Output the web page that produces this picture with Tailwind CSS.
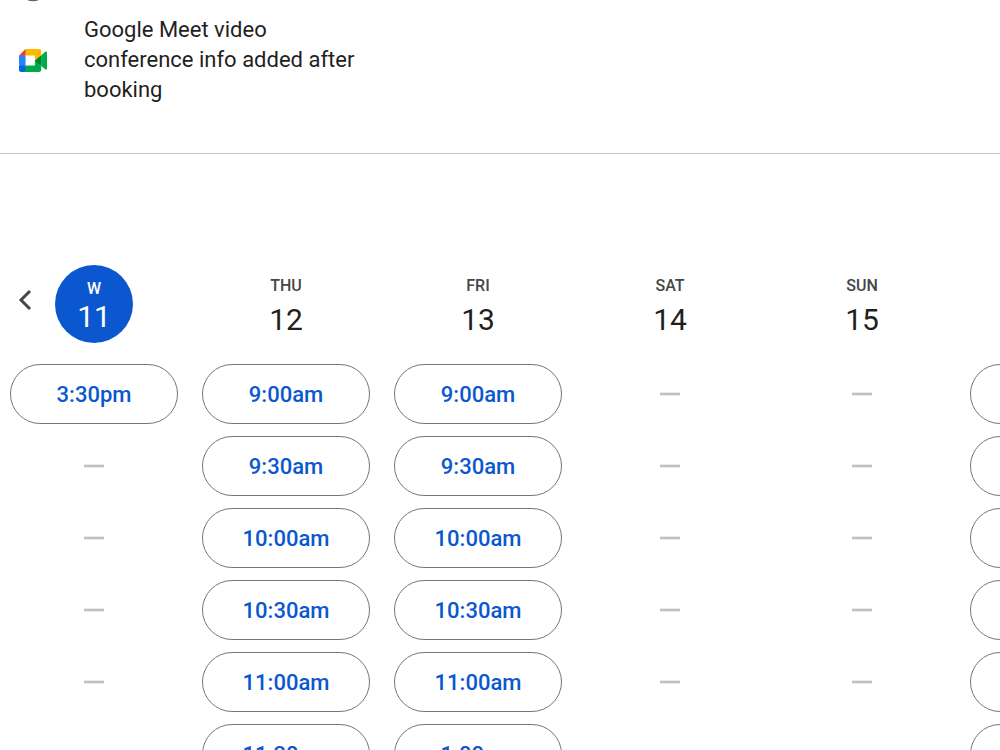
<!DOCTYPE html>
<html lang="en">
<head>
    <meta charset="UTF-8">
    <meta name="viewport" content="width=device-width, initial-scale=1">
    <title>Book an appointment</title>
    <script src="https://cdn.jsdelivr.net/npm/@tailwindcss/browser@4"></script>
</head>
<body class="h-screen overflow-hidden bg-white text-[#1f1f1f] font-['Google_Sans','Roboto',sans-serif]">

    <!-- Booking details -->
    <header class="border-b border-[#c7c7c7] pb-12">
        <div class="flex h-[15px] items-end overflow-hidden pl-[18px]">
            <!-- duration icon, scrolled out of view -->
            <svg class="mb-[13px] size-[30px] shrink-0" viewBox="0 0 30 30" fill="none" stroke="#5f6368" stroke-width="2.5" aria-hidden="true">
                <circle cx="15" cy="15" r="13"/>
                <path d="M15 8v8l5 3"/>
            </svg>
        </div>
        <div class="flex items-center pl-[19px]">
            <svg class="h-[23px] w-7 shrink-0" viewBox="0 0 87.5 72" preserveAspectRatio="none" aria-hidden="true">
                <path fill="#00832d" d="M49.5 36l8.53 9.75 11.47 7.33 2-17.02-2-16.64-11.69 6.44z"/>
                <path fill="#0066da" d="M0 51.5V66c0 3.315 2.685 6 6 6h14.5l3-10.96-3-9.54-9.95-3z"/>
                <path fill="#e94235" d="M20.5 0L0 20.5l10.55 3 9.95-3 2.95-9.41z"/>
                <path fill="#2684fc" d="M20.5 20.5H0v31h20.5z"/>
                <path fill="#00ac47" d="M82.6 8.68L69.5 19.42v33.66l13.16 10.79c1.97 1.54 4.85.135 4.85-2.37V11c0-2.535-2.945-3.925-4.91-2.32zM49.5 36v15.5h-29V72h43c3.315 0 6-2.685 6-6V53.08z"/>
                <path fill="#ffba00" d="M63.5 0h-43v20.5h29V36l20-16.57V6c0-3.315-2.685-6-6-6z"/>
            </svg>
            <p class="ml-[37px] w-72 text-[22px] leading-[30px]">Google Meet video conference info added after booking</p>
        </div>
    </header>

    <!-- Week view -->
    <main class="relative overflow-hidden pt-[111px] pl-[10px]">
        <button type="button" aria-label="Previous week" class="absolute top-[134px] left-[13px] flex size-6 items-center justify-center">
            <svg class="size-6" viewBox="0 0 24 24" fill="none" stroke="#444746" stroke-width="3" aria-hidden="true">
                <path d="M17 3L8 12L17 21"/>
            </svg>
        </button>
        <div id="week" class="flex gap-6"></div>
    </main>

    <script>
        const days = [
            { name: "W", date: 11, today: true, slots: ["3:30pm", "", "", "", "", ""] },
            { name: "THU", date: 12, slots: ["9:00am", "9:30am", "10:00am", "10:30am", "11:00am", "11:30am"] },
            { name: "FRI", date: 13, slots: ["9:00am", "9:30am", "10:00am", "10:30am", "11:00am", "1:00pm"] },
            { name: "SAT", date: 14, slots: ["", "", "", "", "", ""] },
            { name: "SUN", date: 15, slots: ["", "", "", "", "", ""] },
            { name: "MON", date: 16, slots: ["9:00am", "9:30am", "10:00am", "10:30am", "11:00am", "11:30am"] },
        ];

        function dayHeader(day) {
            if (day.today) {
                return `<h2 class="flex size-[78px] flex-col items-center rounded-full bg-[#0b57d0] pt-[14px] text-white">
                    <span class="text-base leading-5 font-medium">${day.name}</span>
                    <span class="text-[30px] leading-9">${day.date}</span>
                </h2>`;
            }
            return `<h2 class="flex h-[78px] flex-col items-center pt-[11px]">
                <span class="text-base leading-5 font-medium text-[#444746]">${day.name}</span>
                <span class="mt-1 text-[30px] leading-10">${day.date}</span>
            </h2>`;
        }

        // empty slots are shown as a dash
        function slot(time) {
            if (!time) {
                return `<li class="flex h-[60px] items-center justify-center"><span class="h-1 w-5 border-y border-[#e8eaed] bg-[#bdc1c6]"></span></li>`;
            }
            return `<li><button type="button" class="h-[60px] w-full rounded-full border border-[#747775] text-[22px] font-medium text-[#0b57d0] hover:bg-blue-50">${time}</button></li>`;
        }

        document.getElementById("week").innerHTML = days.map((day) => `
            <section class="flex w-[168px] shrink-0 flex-col items-center">
                ${dayHeader(day)}
                <ul class="mt-[21px] flex w-full flex-col gap-3">${day.slots.map(slot).join("")}</ul>
            </section>`).join("");
    </script>
</body>
</html>
